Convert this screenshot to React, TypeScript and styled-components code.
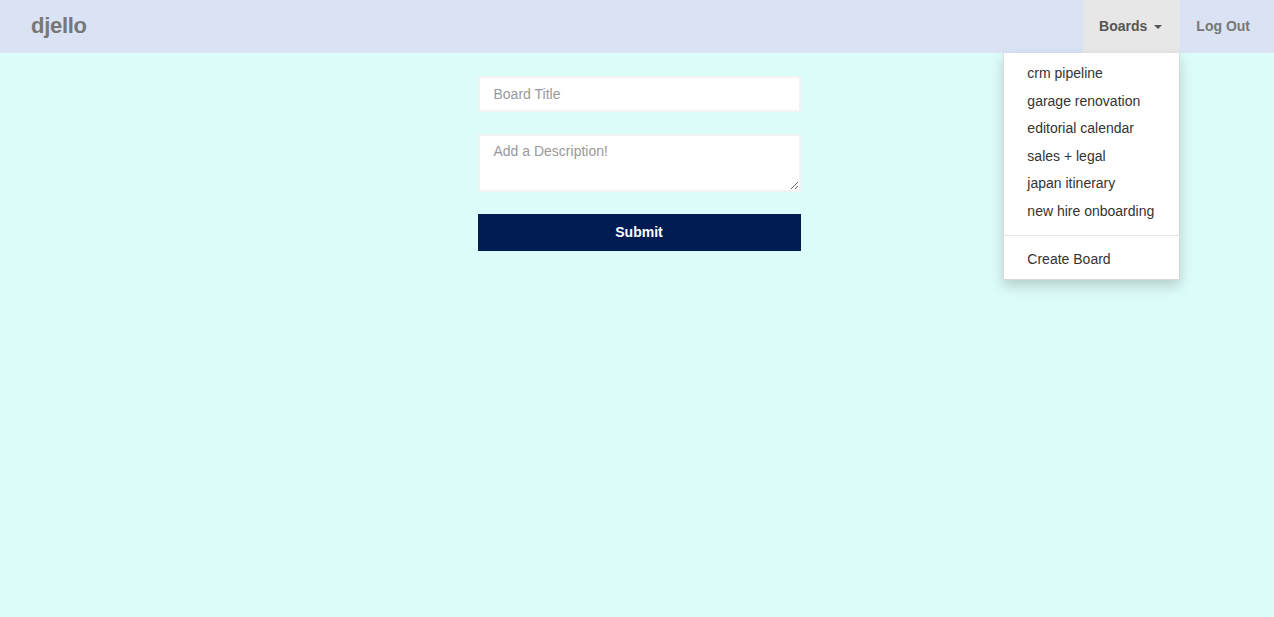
import React from 'react'
import styled, { createGlobalStyle } from 'styled-components'

const GlobalStyle = createGlobalStyle`
    html, body {
        margin: 0;
        padding: 0;
        background: #dcfcf9;
        font-family: 'Liberation Sans', Arial, sans-serif;
        font-size: 14px;
        color: #333;
    }
    * {
        box-sizing: border-box;
    }
`

const boards = [
    'crm pipeline',
    'garage renovation',
    'editorial calendar',
    'sales + legal',
    'japan itinerary',
    'new hire onboarding',
]

const Page = styled.div`
    min-height: 617px;
    background: #dcfcf9;
`

const Navbar = styled.nav`
    display: flex;
    align-items: stretch;
    justify-content: space-between;
    height: 53px;
    background: #dae3f4;
    padding: 0 0 0 31px;
`

const Brand = styled.a`
    display: flex;
    align-items: center;
    font-size: 22px;
    font-weight: bold;
    color: #777;
    letter-spacing: -0.3px;
    padding-bottom: 2px;
`

const NavList = styled.ul`
    display: flex;
    margin: 0;
    padding: 0;
    list-style: none;
`

const NavItem = styled.li<{ $open?: boolean; $last?: boolean }>`
    position: relative;
    display: flex;
    align-items: center;
    padding: 0 ${(p) => (p.$last ? '24px' : '18px')} 2px 16px;
    background: ${(p) => (p.$open ? '#e7e7e7' : 'transparent')};
    color: ${(p) => (p.$open ? '#555' : '#777')};
    font-weight: bold;
    font-size: 14px;
    cursor: pointer;
`

const Caret = styled.span`
    display: inline-block;
    width: 0;
    height: 0;
    margin-left: 7px;
    margin-top: 2px;
    border-top: 4px solid #555;
    border-left: 4px solid transparent;
    border-right: 4px solid transparent;
`

const Dropdown = styled.ul`
    position: absolute;
    top: 53px;
    right: 0;
    width: 177px;
    margin: 0;
    padding: 7px 0 6px;
    list-style: none;
    background: #fff;
    border: 1px solid rgba(0, 0, 0, 0.15);
    border-top: none;
    box-shadow: 0 6px 12px rgba(0, 0, 0, 0.175);
    font-weight: normal;
    z-index: 10;
`

const DropItem = styled.li`
    padding: 3px 23px;
    line-height: 21.6px;
    color: #333;
    white-space: nowrap;
`

const Divider = styled.li`
    height: 1px;
    margin: 9px 0 10px;
    background: #e5e5e5;
`

const Form = styled.form`
    display: flex;
    flex-direction: column;
    width: 323px;
    margin: 23px auto 0;
    transform: translateX(2px);
`

const Input = styled.input`
    height: 36px;
    padding: 0 14px 1px;
    border: 2px solid #f2f4f4;
    background: #fff;
    font: inherit;
    font-size: 14px;
    outline: none;
    margin-bottom: 22px;
    &::placeholder {
        color: #999;
    }
`

const TextArea = styled.textarea`
    height: 58px;
    padding: 7px 14px;
    border: 2px solid #f2f4f4;
    background: #fff;
    font: inherit;
    font-size: 14px;
    outline: none;
    margin-bottom: 22px;
    resize: vertical;
    &::placeholder {
        color: #999;
    }
`

const SubmitButton = styled.button`
    height: 37px;
    padding-bottom: 2px;
    border: none;
    background: #001c52;
    color: #fff;
    font: inherit;
    font-weight: bold;
    font-size: 14px;
    cursor: pointer;
`

export default function App() {
    return (
        <Page>
            <GlobalStyle />
            <Navbar>
                <Brand>djello</Brand>
                <NavList>
                    <NavItem $open>
                        Boards
                        <Caret />
                        <Dropdown>
                            {boards.map((b) => (
                                <DropItem key={b}>{b}</DropItem>
                            ))}
                            <Divider />
                            <DropItem>Create Board</DropItem>
                        </Dropdown>
                    </NavItem>
                    <NavItem $last>Log Out</NavItem>
                </NavList>
            </Navbar>
            <Form onSubmit={(e) => e.preventDefault()}>
                <Input placeholder="Board Title" />
                <TextArea placeholder="Add a Description!" />
                <SubmitButton type="submit">Submit</SubmitButton>
            </Form>
        </Page>
    )
}
